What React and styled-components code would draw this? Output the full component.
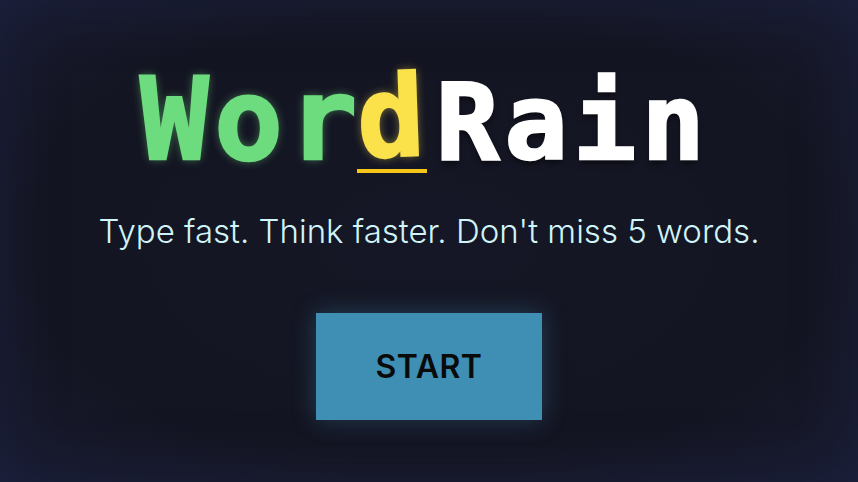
import styled, { createGlobalStyle } from 'styled-components';

const GlobalStyle = createGlobalStyle`
  html, body {
    margin: 0;
    padding: 0;
    background: #141622;
  }
  * {
    box-sizing: border-box;
  }
`;

const Screen = styled.div`
  width: 100vw;
  height: 100vh;
  display: flex;
  flex-direction: column;
  align-items: center;
  justify-content: center;
  background: radial-gradient(ellipse at center, #151726 0%, #141522 65%, #181b30 100%);
  box-shadow: inset 0 0 60px rgba(30, 36, 70, 0.6);
  overflow: hidden;
`;

const Title = styled.h1`
  margin: 0 0 0 -8px;
  font-family: 'DejaVu Sans Mono', monospace;
  font-weight: bold;
  line-height: 1;
  white-space: nowrap;
  display: flex;
  align-items: baseline;
`;

const Part = styled.span`
  font-size: ${(p) => p.$size}px;
  letter-spacing: 0.05em;
  color: ${(p) => p.$color};
  text-shadow: ${(p) => p.$shadow};
  -webkit-text-stroke: 2.5px ${(p) => p.$color};
`;

const Cursor = styled.span`
  position: relative;
  display: inline-block;
  font-size: 112px;
  letter-spacing: 0.05em;

  &::after {
    content: '';
    position: absolute;
    left: -6px;
    bottom: 3px;
    width: 70px;
    height: 4px;
    background: #f5c518;
  }
`;

const Letter = styled.span`
  display: inline-block;
  color: #fbe14a;
  -webkit-text-stroke: 2.5px #fbe14a;
  text-shadow: 0 0 10px rgba(251, 225, 74, 0.55);
  transform: translate(-6px, -3px) rotate(-2deg);
`;

const Tagline = styled.p`
  margin: 34px 0 0;
  font-family: Inter, 'Liberation Sans', sans-serif;
  font-weight: 300;
  font-size: 33px;
  color: #d0f4f8;
`;

const StartButton = styled.button`
  margin-top: 62px;
  width: 226px;
  height: 107px;
  border: none;
  border-radius: 0;
  background: #3f8fb5;
  color: #0a0a0a;
  font-family: Inter, 'Liberation Sans', sans-serif;
  font-weight: 600;
  font-size: 32px;
  letter-spacing: 0.5px;
  box-shadow: 0 0 22px rgba(63, 143, 181, 0.35);
  cursor: pointer;
`;

export default function App() {
  return (
    <>
      <GlobalStyle />
      <Screen>
        <Title>
          <Part $size={114} $color="#6ddc7e" $shadow="0 0 10px rgba(109, 220, 126, 0.55)">
            Wor
          </Part>
          <Cursor>
            <Letter>d</Letter>
          </Cursor>
          <Part $size={105} $color="#ffffff" $shadow="0 4px 6px rgba(0, 0, 0, 0.6)">
            Rain
          </Part>
        </Title>
        <Tagline>Type fast. Think faster. Don't miss 5 words.</Tagline>
        <StartButton>START</StartButton>
      </Screen>
    </>
  );
}
